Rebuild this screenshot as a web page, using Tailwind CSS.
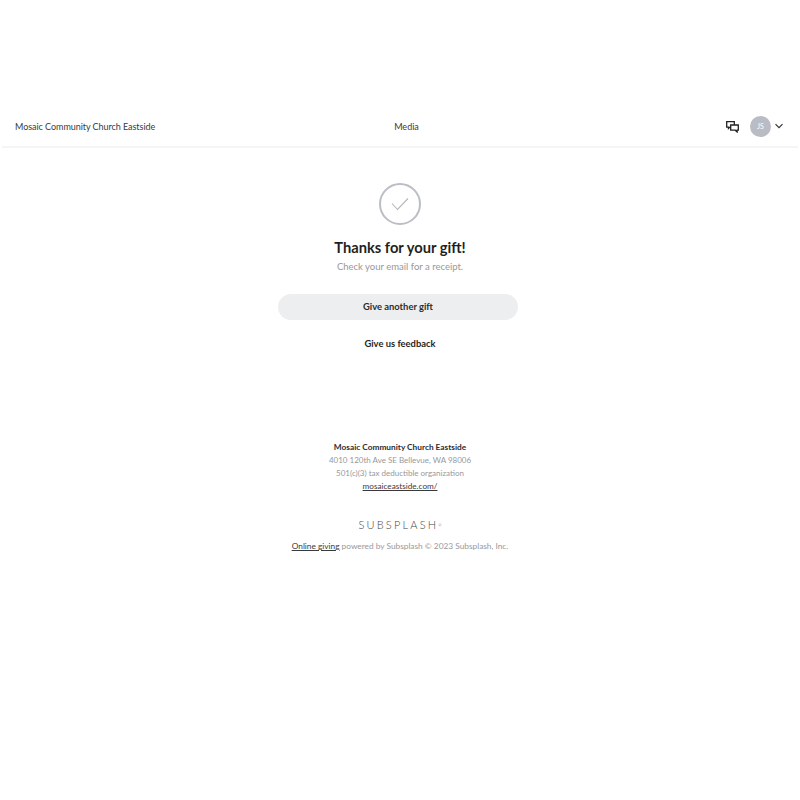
<!DOCTYPE html>
<html lang="en">
<head>
  <meta charset="UTF-8">
  <meta name="viewport" content="width=device-width, initial-scale=1.0">
  <title>Thanks for your gift</title>
  <script src="https://cdn.jsdelivr.net/npm/@tailwindcss/browser@4"></script>
</head>
<body class="bg-white h-[800px] overflow-hidden font-['Lato','Liberation_Sans',sans-serif]">
  <div class="pt-[105px]">
    <header class="h-[43px] mx-[2px] border-b-2 border-[#f5f5f5] grid grid-cols-3 items-center pl-[13px] pr-[13px] pt-[1px]">
      <div class="text-[9px] tracking-[-0.05px] pt-[2px] text-[#3a3a3c] whitespace-nowrap">Mosaic Community Church Eastside</div>
      <div class="text-[9px] pt-[2px] text-[#3a3a3c] text-center pl-[13px]">Media</div>
      <div class="flex items-center justify-end">
        <svg class="w-[13px] h-[12px] mr-[11px] mt-[1px]" viewBox="0 0 13 12" fill="none" stroke="#222" stroke-width="1.300">
          <path d="M.7.700h7.600v5.400H4L2.500 7.500V6.100H.7z" fill="white"/>
          <path d="M4.700 4h7.600v5.200h-1.200v1.800L9.300 9.200H4.700z" fill="white"/>
        </svg>
        <div class="w-[21px] h-[21px] rounded-full bg-[#b9bcc4] text-white text-[7px] flex items-center justify-center">JS</div>
        <svg class="w-[10px] h-[10px] ml-[3px] mr-[1px]" viewBox="0 0 10 10" fill="none" stroke="#333" stroke-width="1.200">
          <path d="M1.500 3.200 5 6.700 8.500 3.200"/>
        </svg>
      </div>
    </header>

    <main class="flex flex-col items-center pt-[35px]">
      <div class="w-[42px] h-[42px] rounded-full border-2 border-[#bcbec6] flex items-center justify-center">
        <svg class="w-[18px] h-[14px]" viewBox="0 0 18 14" fill="none" stroke="#b4b6bc" stroke-width="1.100">
          <path d="M1 6.500 6.500 12.500 17 1.500"/>
        </svg>
      </div>
      <h1 class="mt-[12px] text-[14.700px] leading-[20px] font-bold text-[#1f1f21]">Thanks for your gift!</h1>
      <p class="mt-[3px] text-[9.500px] leading-[14px] text-[#97989c]">Check your email for a receipt.</p>
      <button class="mt-[20px] mr-[4px] w-[240px] h-[26px] rounded-full bg-[#edeef0] text-[9.400px] font-bold text-[#2c2c2e]">Give another gift</button>
      <a class="mt-[17px] text-[9.400px] leading-[13px] font-bold text-[#1f1f21]">Give us feedback</a>
    </main>

    <footer class="flex flex-col items-center mt-[91px] text-[8.300px] leading-[13px] text-[#97989c]">
      <div class="font-bold text-[#2c2c2e]">Mosaic Community Church Eastside</div>
      <div class="text-[8px]">4010 120th Ave SE Bellevue, WA 98006</div>
      <div class="text-[8px]">501(c)(3) tax deductible organization</div>
      <a class="underline text-[#3a3a3c] text-[8.200px]">mosaiceastside.com/</a>
      <div class="mt-[25px] text-[11px] leading-[14px] tracking-[2.200px] font-light text-[#444446]">SUBSPLASH<sup class="text-[4px] tracking-normal">®</sup></div>
      <div class="mt-[8px]"><a class="underline text-[#3a3a3c]">Online giving</a> powered by Subsplash © 2023 Subsplash, Inc.</div>
    </footer>
  </div>
</body>
</html>
